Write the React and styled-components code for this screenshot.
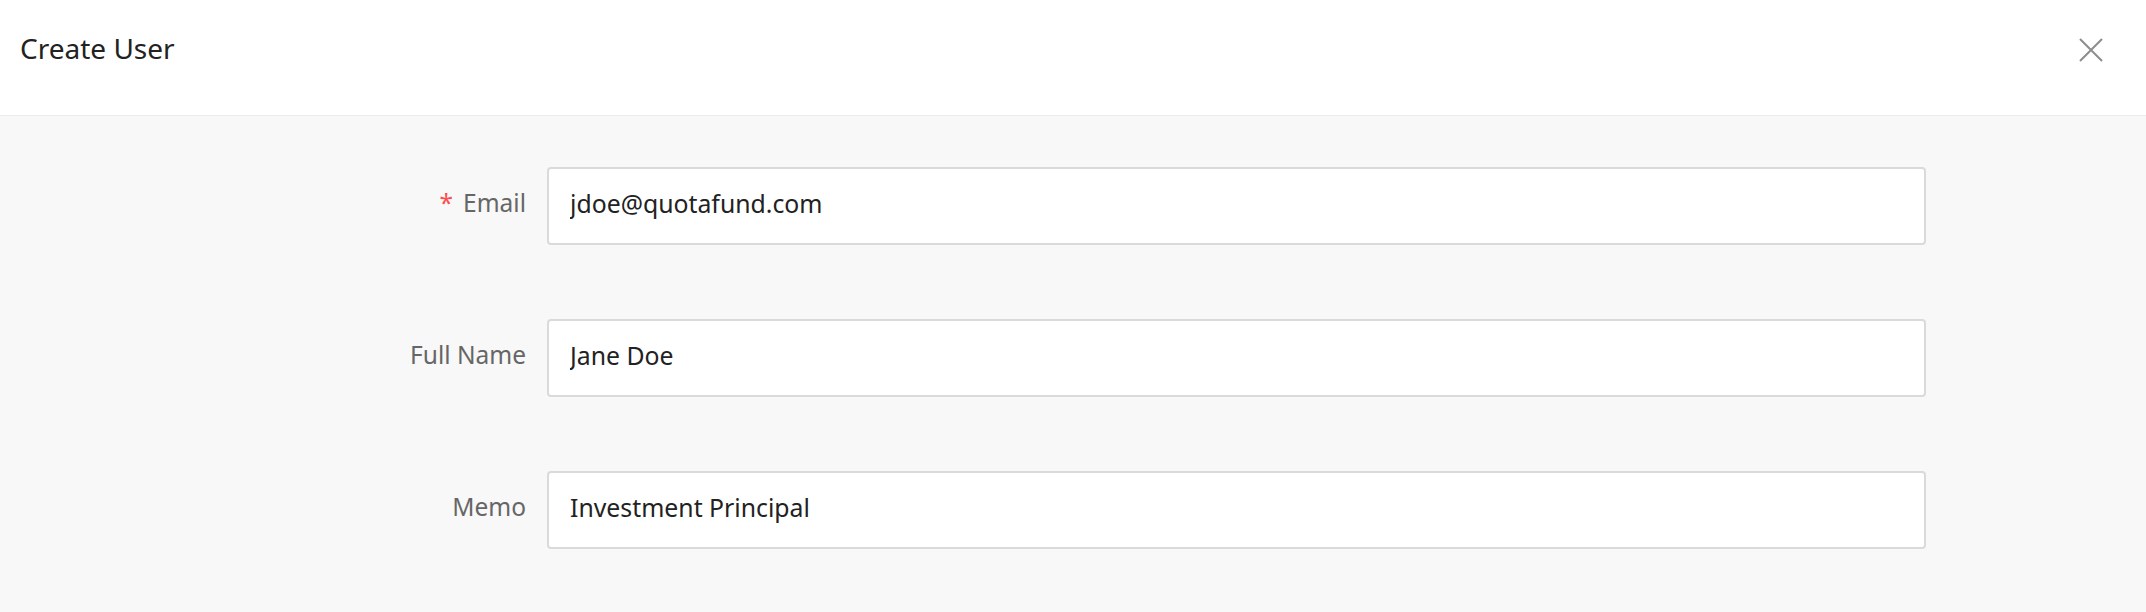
import React from "react";
import styled, { createGlobalStyle } from "styled-components";

const GlobalStyle = createGlobalStyle`
  html, body {
    margin: 0;
    padding: 0;
    background: #f8f8f8;
    font-family: "Noto Sans", "Noto Sans CJK KR", sans-serif;
  }
`;

const fields = [
  { label: "Email", value: "jdoe@quotafund.com", required: true },
  { label: "Full Name", value: "Jane Doe" },
  { label: "Memo", value: "Investment Principal" },
];

const App = () => {
  return (
    <Page>
      <GlobalStyle />
      <Header>
        <Title>Create User</Title>
        <CloseButton aria-label="close">
          <svg width="24" height="24" viewBox="0 0 24 24">
            <path d="M1 1 L23 23 M23 1 L1 23" stroke="#8c8c8c" strokeWidth="2" fill="none" />
          </svg>
        </CloseButton>
      </Header>

      <Form>
        {fields.map((f) => (
          <Row key={f.label}>
            <Label>
              {f.required && <Required>*</Required>}
              {f.label}
            </Label>
            <Input defaultValue={f.value} />
          </Row>
        ))}
      </Form>
    </Page>
  );
};

export default App;

const Page = styled.div`
  width: 2146px;
  height: 612px;
  background: #f8f8f8;
  overflow: hidden;
`;

const Header = styled.div`
  height: 115px;
  background: #ffffff;
  border-bottom: 1px solid #ececec;
  display: flex;
  align-items: center;
  justify-content: space-between;
  padding: 0 43px 0 20px;
`;

const Title = styled.div`
  font-size: 28px;
  color: #222222;
  margin-bottom: 20px;
`;

const CloseButton = styled.button`
  border: none;
  background: none;
  padding: 0;
  display: flex;
  cursor: pointer;
  margin-bottom: 16px;
`;

const Form = styled.div`
  display: flex;
  flex-direction: column;
  gap: 74px;
  padding-top: 51px;
`;

const Row = styled.div`
  display: grid;
  grid-template-columns: 526px 1379px;
  column-gap: 21px;
  align-items: center;
`;

const Label = styled.label`
  text-align: right;
  font-size: 24.5px;
  color: #666666;
  padding-bottom: 7px;
`;

const Required = styled.span`
  color: #ff4d4f;
  margin-right: 10px;
`;

const Input = styled.input`
  box-sizing: border-box;
  height: 78px;
  width: 100%;
  border: 2px solid #dadada;
  border-radius: 4px;
  background: #ffffff;
  padding: 0 21px 7px;
  font-family: inherit;
  font-size: 24.8px;
  color: #222222;
  outline: none;
`;
